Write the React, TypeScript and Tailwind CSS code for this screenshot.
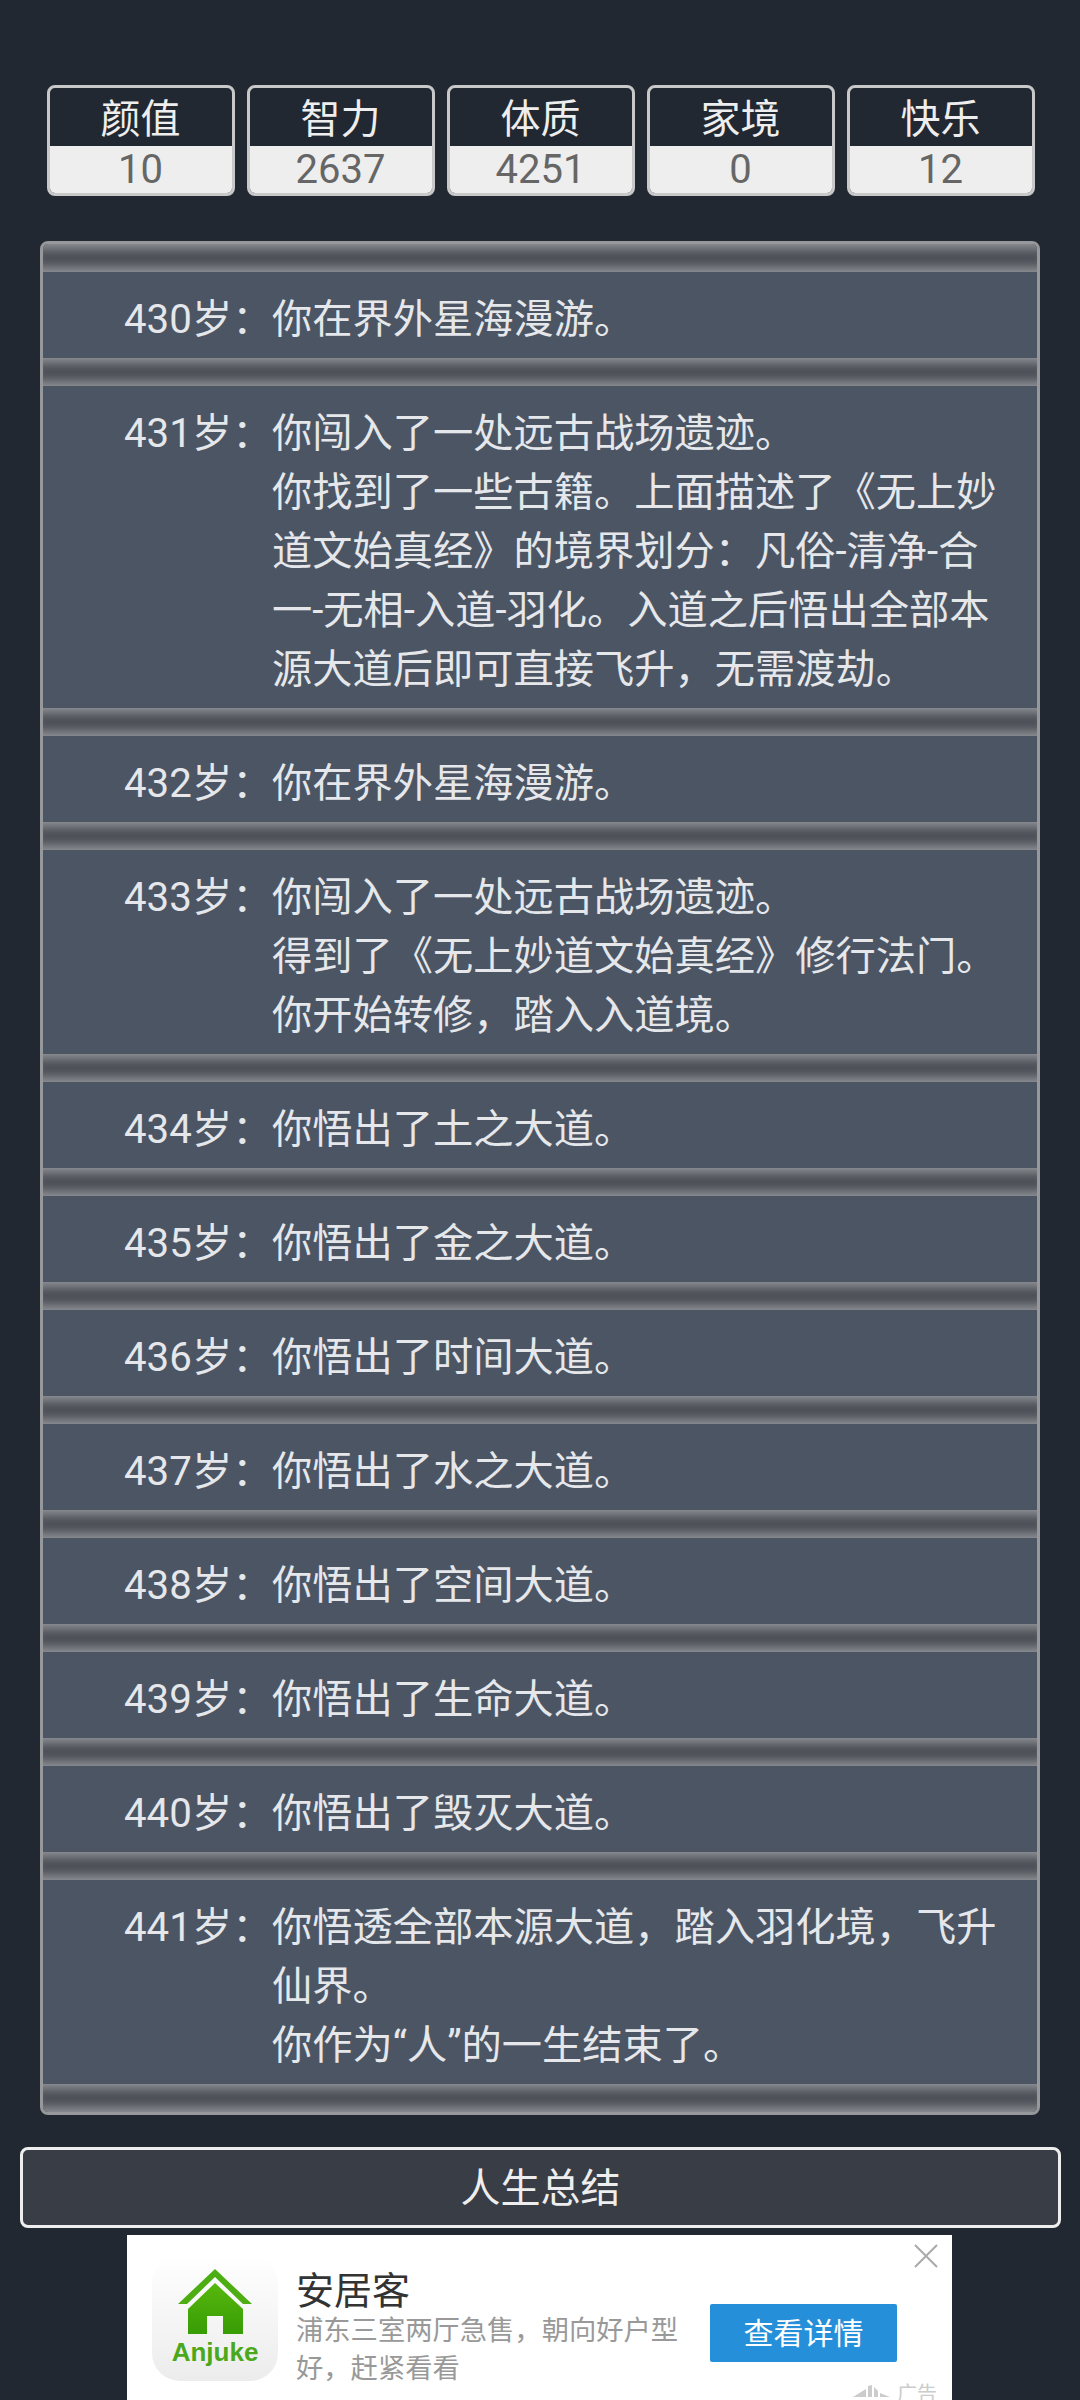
const stats = [
  { label: "颜值", value: "10" },
  { label: "智力", value: "2637" },
  { label: "体质", value: "4251" },
  { label: "家境", value: "0" },
  { label: "快乐", value: "12" },
];

const events = [
  { age: 430, lines: ["你在界外星海漫游。"] },
  {
    age: 431,
    lines: [
      "你闯入了一处远古战场遗迹。",
      "你找到了一些古籍。上面描述了《无上妙道文始真经》的境界划分：凡俗-清净-合一-无相-入道-羽化。入道之后悟出全部本源大道后即可直接飞升，无需渡劫。",
    ],
  },
  { age: 432, lines: ["你在界外星海漫游。"] },
  {
    age: 433,
    lines: [
      "你闯入了一处远古战场遗迹。",
      "得到了《无上妙道文始真经》修行法门。",
      "你开始转修，踏入入道境。",
    ],
  },
  { age: 434, lines: ["你悟出了土之大道。"] },
  { age: 435, lines: ["你悟出了金之大道。"] },
  { age: 436, lines: ["你悟出了时间大道。"] },
  { age: 437, lines: ["你悟出了水之大道。"] },
  { age: 438, lines: ["你悟出了空间大道。"] },
  { age: 439, lines: ["你悟出了生命大道。"] },
  { age: 440, lines: ["你悟出了毁灭大道。"] },
  {
    age: 441,
    lines: ["你悟透全部本源大道，踏入羽化境，飞升仙界。", "你作为“人”的一生结束了。"],
  },
];

const Band = () => (
  <div className="h-[28px] bg-[#4a4d55] shadow-[inset_0_14px_12px_-10px_#9a9ca0,inset_0_-14px_12px_-10px_#9a9ca0]" />
);

const AnjukeIcon = () => (
  <div className="flex flex-col items-center w-[126px] h-[126px] shrink-0 rounded-[28px] bg-gradient-to-b from-white to-[#ececec]">
    <svg width="126" height="82" viewBox="0 0 126 82" className="shrink-0">
      <defs>
        <linearGradient id="house" x1="0" y1="0" x2="0" y2="1">
          <stop offset="0" stopColor="#58b80e" />
          <stop offset="1" stopColor="#379c05" />
        </linearGradient>
      </defs>
      <path d="M63 14 L100 49 L91 49 L63 22 L35 49 L26 49 Z" fill="#4cae12" />
      <path d="M63 28 L91 54 V79 H71 V61 H55 V79 H36 V54 Z" fill="url(#house)" />
    </svg>
    <span className="font-['Liberation_Sans',sans-serif] font-bold text-[26px] leading-[30px] text-[#4aa81a]">
      Anjuke
    </span>
  </div>
);

const App = () => {
  return (
    <main className="flex flex-col w-full h-[2400px] overflow-hidden pt-[85px] bg-[#222831] font-['Roboto','Noto_Sans_CJK_SC',sans-serif]">
      <div className="flex gap-[12px] pl-[46.5px]">
        {stats.map((s) => (
          <div
            key={s.label}
            className="w-[188px] border-[3px] border-[#c8c8c8] rounded-[8px] overflow-hidden text-center text-[40px]"
          >
            <div className="h-[58px] pt-[3px] leading-[58px] text-[#eeeeee]">{s.label}</div>
            <div className="h-[47px] leading-[47px] bg-[#eeeeee] text-[#666666]">{s.value}</div>
          </div>
        ))}
      </div>

      <div className="mt-[45px] mx-[40px] w-[1000px] border-[3px] border-[#96989c] rounded-[8px] overflow-hidden bg-[#4b5563]">
        <Band />
        {events.map((e) => (
          <div key={e.age}>
            <div className="flex pl-[81px] pr-[30px] pt-[17.5px] pb-[9.5px] text-[40.25px] leading-[59px] text-[#e5e7eb]">
              <div className="w-[148px] shrink-0 whitespace-nowrap">{e.age}岁：</div>
              <div className="flex-1">
                {e.lines.map((line) => (
                  <p key={line}>{line}</p>
                ))}
              </div>
            </div>
            <Band />
          </div>
        ))}
      </div>

      <button className="mt-[32px] ml-[20px] w-[1041px] h-[81px] shrink-0 border-[3px] border-[#eeeeee] rounded-[8px] bg-[#393d46] pt-[3px] text-[40px] text-[#eeeeee]">
        人生总结
      </button>

      <div className="relative flex items-start mt-[7px] ml-[127px] w-[825px] h-[165px] shrink-0 overflow-hidden bg-white pl-[25px] pt-[20px]">
        <AnjukeIcon />
        <div className="ml-[18px] mt-[16px] w-[396px]">
          <p className="text-[38px] leading-[41px] text-[#333333]">安居客</p>
          <p className="text-[27.3px] leading-[38px] text-[#999999]">浦东三室两厅急售，朝向好户型好，赶紧看看</p>
        </div>
        <div className="flex items-center justify-center ml-[18px] mt-[49px] w-[187px] h-[58px] rounded-[2px] bg-[#2590d9] text-[30px] text-white">
          查看详情
        </div>

        <svg width="24" height="24" viewBox="0 0 24 24" className="absolute top-[9px] left-[787px]">
          <path d="M1 1 L23 23 M23 1 L1 23" stroke="#aaaaaa" strokeWidth="2" fill="none" />
        </svg>
        <svg width="38" height="14" viewBox="0 0 38 14" className="absolute top-[150px] left-[726px]">
          <path d="M0 12 L13 4 V12 Z M15 1 L19 0 V12 H15 Z M21 2 L25 6 V12 H21 Z M27 8 L37 12 H27 Z" fill="#cccccc" />
        </svg>
        <span className="absolute top-[147px] left-[770px] text-[20px] leading-[24px] text-[#cccccc]">广告</span>
      </div>
    </main>
  );
};

export default App;
